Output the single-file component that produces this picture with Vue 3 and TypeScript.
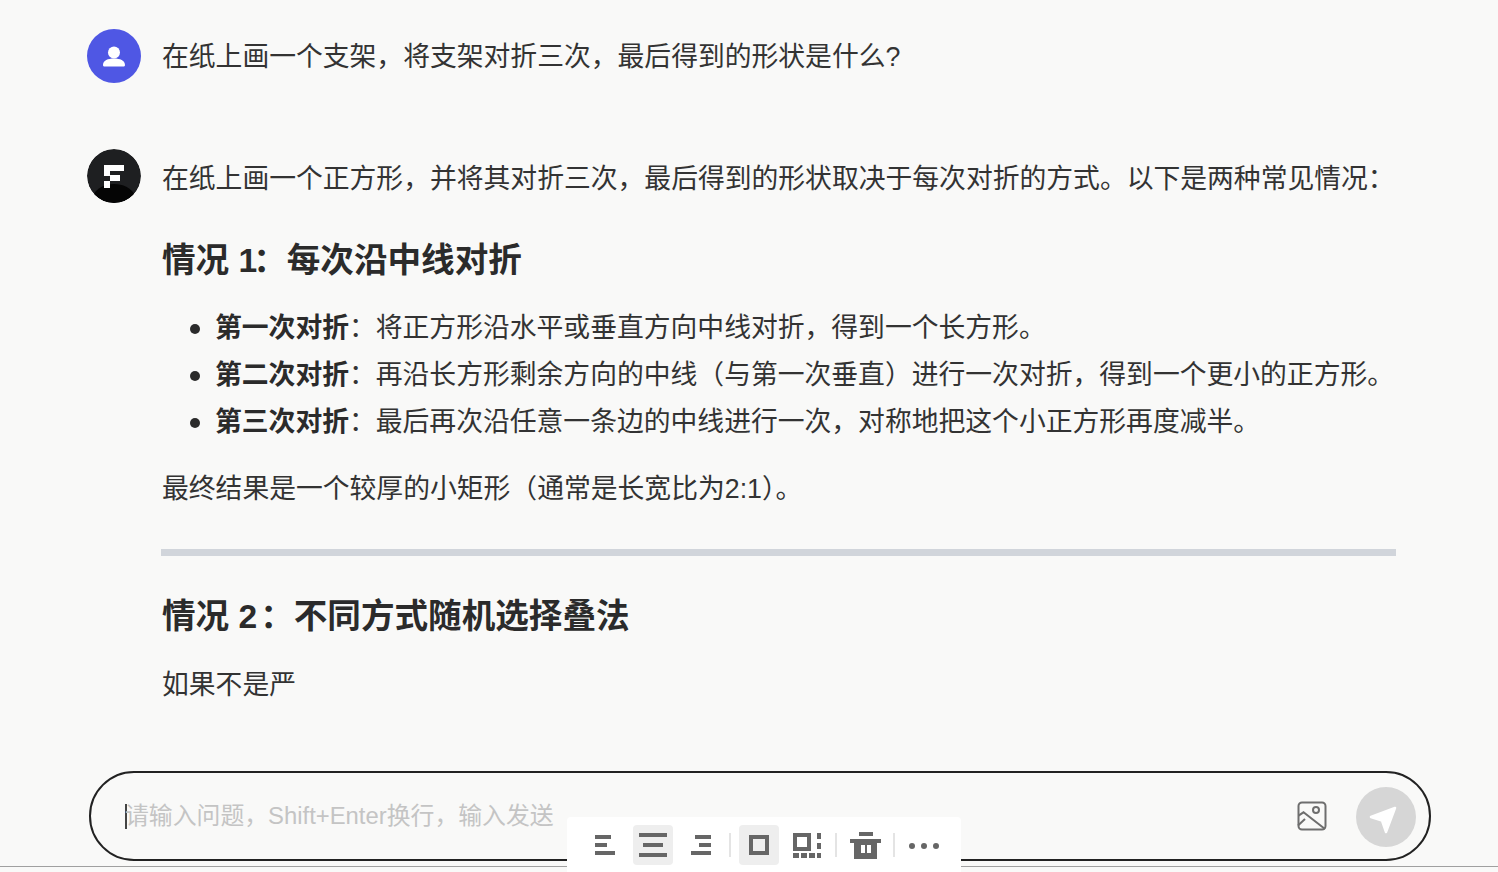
<script setup lang="ts">

    // watermark repeats on a skewed grid
    const marks: { x: number, y: number }[] = []
    for (let j = -2; j <= 1; j++) {
        for (let i = -1; i <= 3; i++) {
            const x = 60 + i * 534 + j * 256
            const y = 504 - i * 23 + j * 260
            if (x > -90 && x < 1590) marks.push({ x, y })
        }
    }

    const bullets = [
        { title: '第一次对折', text: '将正方形沿水平或垂直方向中线对折，得到一个长方形。' },
        { title: '第二次对折', text: '再沿长方形剩余方向的中线（与第一次垂直）进行一次对折，得到一个更小的正方形。' },
        { title: '第三次对折', text: '最后再次沿任意一条边的中线进行一次，对称地把这个小正方形再度减半。' }
    ]

</script>
<template>
    <div class="page">
        <div class="watermarks">
            <div v-for="m in marks" :key="m.x + '-' + m.y" class="mark" :style="{ left: m.x + 'px', top: m.y + 'px' }">
                B12C2F497E<br>B756109368<br>EC275D55ED<br>C8
            </div>
        </div>

        <main class="chat">
            <section class="msg msg-user">
                <div class="avatar avatar-user">
                    <svg width="54" height="54" viewBox="0 0 54 54">
                        <circle cx="27" cy="23.500" r="6" fill="#fff" />
                        <path d="M16 36c0-4.500 5-6.500 11-6.500s11 2 11 6.500c0 1-.8 1.500-1.800 1.500H17.800c-1 0-1.800-.5-1.800-1.500z" fill="#fff" />
                    </svg>
                </div>
                <p class="msg-text">在纸上画一个支架，将支架对折三次，最后得到的形状是什么?</p>
            </section>

            <section class="msg msg-bot">
                <div class="avatar avatar-bot">
                    <svg width="54" height="54" viewBox="0 0 54 54">
                        <circle cx="27" cy="27" r="27" fill="#1e1f21" />
                        <path d="M7 45c3-6 11-10 20-10s17 4 20 10c-5 6-12 9-20 9s-15-3-20-9z" fill="#050505" />
                        <path d="M17 16H37V22H23V26H33V32H23V39H17V32H23V27H17z" fill="#fff" />
                    </svg>
                </div>
                <div class="answer">
                    <p class="msg-text">在纸上画一个正方形，并将其对折三次，最后得到的形状取决于每次对折的方式。以下是两种常见情况：</p>
                    <h3 class="case-title first">情况 <span class="num-narrow">1</span>：每次沿中线对折</h3>
                    <ul class="steps">
                        <li v-for="b in bullets" :key="b.title"><strong>{{ b.title }}</strong>：{{ b.text }}</li>
                    </ul>
                    <p class="msg-text result">最终结果是一个较厚的小矩形（通常是长宽比为2:1）。</p>
                    <hr class="divider">
                    <h3 class="case-title">情况 <span class="num-wide">2</span>：不同方式随机选择叠法</h3>
                    <p class="msg-text partial">如果不是严</p>
                </div>
            </section>
        </main>

        <footer class="input-wrap">
            <div class="input-box">
                <span class="caret"></span>
                <span class="placeholder">请输入问题，Shift+Enter换行，输入发送</span>
                <svg class="image-icon" width="30" height="30" viewBox="0 0 30 30" fill="none" stroke="#6e6e6e" stroke-width="2">
                    <rect x="1.500" y="1.500" width="27" height="27" rx="3.500" />
                    <circle cx="19" cy="9" r="3" />
                    <path d="M1.500 14.700l5-3.400L28 28" />
                    <path d="M1 24.500l7-6.500" />
                </svg>
                <button class="send">
                    <svg width="60" height="60" viewBox="0 0 60 60">
                        <path d="M39 21L15 30l11 3.500L30 45z" fill="#fff" stroke="#fff" stroke-width="2.500" stroke-linejoin="round" />
                    </svg>
                </button>
            </div>
        </footer>

        <div class="toolbar">
            <button class="tool">
                <svg width="40" height="40" viewBox="0 0 40 40" fill="#666">
                    <rect x="10" y="10" width="16" height="4" /><rect x="10" y="18" width="12" height="4" /><rect x="10" y="26" width="20" height="4" />
                </svg>
            </button>
            <button class="tool active">
                <svg width="40" height="40" viewBox="0 0 40 40" fill="#666">
                    <rect x="6" y="8" width="28" height="4" /><rect x="10" y="18" width="20" height="4" /><rect x="6" y="28" width="28" height="4" />
                </svg>
            </button>
            <button class="tool">
                <svg width="40" height="40" viewBox="0 0 40 40" fill="#666">
                    <rect x="14" y="10" width="16" height="4" /><rect x="18" y="18" width="12" height="4" /><rect x="10" y="26" width="20" height="4" />
                </svg>
            </button>
            <span class="sep"></span>
            <button class="tool active">
                <svg width="40" height="40" viewBox="0 0 40 40">
                    <rect x="12" y="12" width="16" height="16" fill="none" stroke="#666" stroke-width="4" />
                </svg>
            </button>
            <button class="tool">
                <svg width="40" height="40" viewBox="0 0 40 40" fill="#666">
                    <path fill-rule="evenodd" d="M6 8h18v18H6zM10 12v10h10V12z" />
                    <rect x="30" y="8" width="4" height="6" /><rect x="30" y="18" width="4" height="6" /><rect x="30" y="28" width="4" height="5" />
                    <rect x="6" y="28" width="6" height="5" /><rect x="14" y="28" width="6" height="5" /><rect x="22" y="28" width="6" height="5" />
                </svg>
            </button>
            <span class="sep"></span>
            <button class="tool">
                <svg width="40" height="40" viewBox="0 0 40 40" fill="#666">
                    <rect x="14" y="7" width="14" height="4" />
                    <rect x="5" y="14" width="31" height="4" />
                    <path fill-rule="evenodd" d="M9 18h23v16H9zM16 20v8h4v-8zM22 20v8h4v-8z" />
                </svg>
            </button>
            <span class="sep"></span>
            <button class="tool">
                <svg width="40" height="40" viewBox="0 0 40 40" fill="#666">
                    <circle cx="9" cy="21" r="3" /><circle cx="21" cy="21" r="3" /><circle cx="33" cy="21" r="3" />
                </svg>
            </button>
        </div>
    </div>
</template>
<style scoped>

.page {
    position: relative;
    width: 1498px;
    height: 872px;
    overflow: hidden;
    display: flex;
    flex-direction: column;
    background-color: #f9f9f8;
    color: #333;
    font-family: "Liberation Sans", "Noto Sans CJK SC", sans-serif;
}

.watermarks {
    position: absolute;
    inset: 0;
    pointer-events: none;
}

.mark {
    position: absolute;
    width: 180px;
    margin-left: -90px;
    margin-top: -70px;
    transform: rotate(-45deg);
    font-size: 27px;
    line-height: 35px;
    white-space: nowrap;
    color: rgba(0, 0, 0, 0.022);
}

.chat {
    position: relative;
    flex: 1;
    padding: 29px 102px 0 87px;
}

.msg {
    display: flex;
    gap: 21px;
}

.msg-bot {
    margin-top: 65px;
}

.msg-user .msg-text {
    padding-top: 1px;
}

.avatar {
    flex: none;
    width: 54px;
    height: 54px;
    border-radius: 50%;
    overflow: hidden;
}

.avatar svg {
    display: block;
}

.avatar-user {
    background-color: #4f57e4;
}

.msg-text {
    margin: 0;
    font-size: 26.800px;
    line-height: 54px;
    white-space: nowrap;
}

.answer {
    flex: 1;
    min-width: 0;
    padding-top: 3px;
}

.case-title {
    margin: 0;
    font-size: 33.600px;
    line-height: 48px;
    font-weight: 700;
    color: #2b2b2b;
    white-space: nowrap;
}

.case-title.first {
    margin-top: 31px;
}

.num-narrow {
    letter-spacing: -4px;
}

.num-wide {
    letter-spacing: 3px;
}

.steps {
    margin: 20px 0 0;
    padding: 0 0 0 53px;
    list-style: none;
    font-size: 26.800px;
    line-height: 47px;
    white-space: nowrap;
}

.steps li {
    position: relative;
}

.steps li::before {
    content: "";
    position: absolute;
    left: -25px;
    top: 19px;
    width: 10px;
    height: 10px;
    border-radius: 50%;
    background-color: #2b2b2b;
}

.steps strong {
    font-weight: 700;
    color: #2b2b2b;
}

.result {
    margin-top: 16px;
}

.divider {
    height: 7px;
    margin: 33px 0 0 -1px;
    border: 0;
    background-color: #d1d5db;
}

.divider + .case-title {
    margin-top: 37px;
}

.partial {
    margin-top: 17px;
}

.input-wrap {
    position: relative;
    height: 95px;
    padding: 0 67px 0 89px;
    border-bottom: 1px solid #a0a0a0;
    margin-bottom: 5px;
}

.input-box {
    box-sizing: border-box;
    height: 90px;
    display: flex;
    align-items: center;
    padding: 0 13px 0 34px;
    border: 2px solid #222;
    border-radius: 45px;
}

.caret {
    flex: none;
    width: 2px;
    height: 25px;
    background-color: #444;
}

.placeholder {
    flex: 1;
    margin-left: -2px;
    margin-bottom: 6px;
    font-size: 23.850px;
    color: #c4c4c4;
    white-space: nowrap;
}

.image-icon {
    flex: none;
    margin-right: 29px;
}

.send {
    flex: none;
    width: 60px;
    height: 60px;
    margin-top: 2px;
    padding: 0;
    border: 0;
    border-radius: 50%;
    background-color: #d6d6d6;
}

.send svg {
    display: block;
}

.toolbar {
    position: absolute;
    left: 567px;
    top: 817px;
    width: 394px;
    height: 60px;
    box-sizing: border-box;
    display: flex;
    align-items: flex-start;
    gap: 8px;
    padding: 8px 18px 0;
    background-color: #fff;
    border-radius: 4px;
}

.tool {
    flex: none;
    width: 40px;
    height: 40px;
    padding: 0;
    border: 0;
    border-radius: 4px;
    background: transparent;
}

.tool svg {
    display: block;
}

.tool.active {
    background-color: #eee;
}

.sep {
    flex: none;
    width: 2px;
    height: 24px;
    margin-top: 8px;
    background-color: #e4e4e4;
}

</style>
